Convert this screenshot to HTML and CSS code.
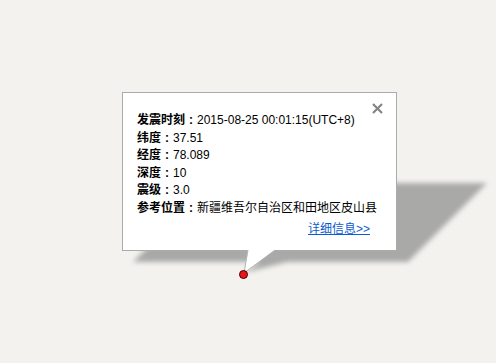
FILE: index.html
```html
<!DOCTYPE html>
<html lang="zh-CN">

<head>
    <meta charset="UTF-8">
    <title>地震信息</title>
    <link rel="stylesheet" href="styles.css">
</head>

<body>
    <div id="map">
        <!-- shadow of the info window, sheared 45deg and half height -->
        <svg class="shadow" width="496" height="363">
            <defs>
                <filter id="blur" x="-10%" y="-20%" width="120%" height="140%">
                    <feGaussianBlur stdDeviation="2.5" />
                </filter>
            </defs>
            <polygon filter="url(#blur)" fill="#a9a9a7"
                points="212,183 487,183 408,262 287,262 243,273 260,262 133,262" />
        </svg>

        <div class="info-window">
            <svg class="close" width="11" height="11" viewBox="0 0 11 11">
                <path d="M1 1L10 10M10 1L1 10" stroke="#858585" stroke-width="2.2" />
            </svg>
            <div class="content">
                <p><b>发震时刻<span class="colon">:</span></b>2015-08-25 00:01:15(UTC+8)</p>
                <p><b>纬度<span class="colon">:</span></b>37.51</p>
                <p><b>经度<span class="colon">:</span></b>78.089</p>
                <p><b>深度<span class="colon">:</span></b>10</p>
                <p><b>震级<span class="colon">:</span></b>3.0</p>
                <p><b>参考位置<span class="colon">:</span></b>新疆维吾尔自治区和田地区皮山县</p>
                <p class="more"><a href="#">详细信息&gt;&gt;</a></p>
            </div>
        </div>

        <svg class="tail" width="40" height="30">
            <polygon points="7,0 34,0 3,23" fill="#fff" />
            <polyline points="7,0 3,23 34,0" fill="none" stroke="#b4b4b4" stroke-width="1" />
        </svg>

        <span class="marker"></span>
    </div>
</body>

</html>
```

FILE: styles.css
```css
body {
    margin: 0;
    font-family: "Liberation Sans", "Noto Sans CJK SC", Arial, sans-serif;
    font-size: 12px;
    color: #000;
}

#map {
    position: relative;
    width: 496px;
    height: 363px;
    background-color: #f3f2ef;
    overflow: hidden;
}

.shadow {
    position: absolute;
    left: 0;
    top: 0;
}

.info-window {
    position: absolute;
    left: 122px;
    top: 92px;
    width: 273px;
    height: 157px;
    background-color: #fff;
    border: 1px solid #ababab;
}

.close {
    position: absolute;
    left: 249px;
    top: 10px;
}

.content {
    width: 240px;
    padding: 19px 0 0 14px;
}

.content p {
    margin: 0;
    line-height: 17.6px;
    white-space: nowrap;
}

.content b {
    font-weight: bold;
}

/* colon centered in a full-width cell */
.colon {
    display: inline-block;
    width: 12px;
    text-align: center;
}

.content .more {
    text-align: right;
    padding-right: 7px;
    margin-top: 3px;
}

.more a {
    color: #0b5bd0;
    text-decoration: underline;
}

.tail {
    position: absolute;
    left: 241px;
    top: 250px;
}

.marker {
    position: absolute;
    left: 239px;
    top: 270px;
    width: 7px;
    height: 7px;
    border-radius: 50%;
    background-color: #e8141a;
    border: 1px solid #400;
}
```
